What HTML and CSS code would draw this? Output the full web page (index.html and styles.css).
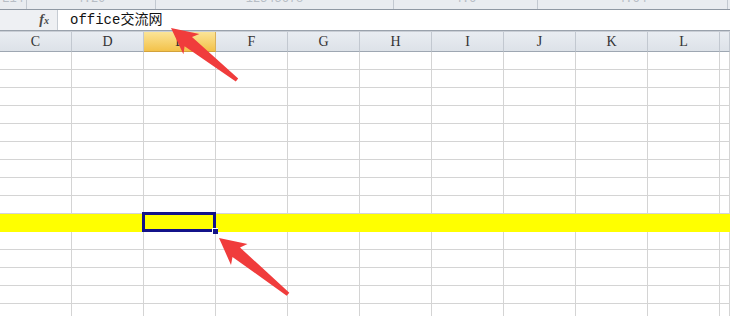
FILE: index.html
```html
<!DOCTYPE html>
<html>
    <head>
        <title>office交流网</title>
        <link rel="stylesheet" href="styles.css">
    </head>
    <body>
        <div class="toolstrip">
            <div class="tool w1"><span>E14</span></div>
            <div class="tool w2"><span>4.29</span></div>
            <div class="tool w3"><span>12345678</span></div>
            <div class="tool w4"><span>4.6</span></div>
            <div class="tool w5"><span>4.64</span></div>
            <div class="tool w6"></div>
        </div>
        <div class="formulabar">
            <div class="namebox"><span class="fx">f<small>x</small></span></div>
            <div class="formula">office交流网</div>
        </div>
        <div class="gap"></div>
        <div class="sheet">
            <div class="row head">
                <div class="cell">C</div>
                <div class="cell">D</div>
                <div class="cell active">E</div>
                <div class="cell">F</div>
                <div class="cell">G</div>
                <div class="cell">H</div>
                <div class="cell">I</div>
                <div class="cell">J</div>
                <div class="cell">K</div>
                <div class="cell">L</div>
                <div class="cell last"></div>
            </div>
        </div>
        <svg class="arrows" width="730" height="316" viewBox="0 0 730 316">
            <polygon points="171,28 199.4,33.9 192,37 238.2,78.6 235.8,81.4 184.6,46.3 183.4,54.3" fill="#f03c3c"/>
            <polygon points="219,238 247.5,244 240,247.5 289.3,292.8 286.7,295.7 232.5,257 231,265" fill="#f03c3c"/>
        </svg>
        <script>
            /* Build the body rows of the sheet; row 10 is filled yellow, cell E selected */
            const sheet = document.querySelector(".sheet");
            for (let r = 0; r < 15; r++) {
                const row = document.createElement("div");
                row.className = "row" + (r === 9 ? " fill" : "");
                for (let c = 0; c < 11; c++) {
                    const cell = document.createElement("div");
                    cell.className = "cell" + (c === 10 ? " last" : "");
                    if (r === 9 && c === 2) cell.classList.add("selected");
                    row.appendChild(cell);
                }
                sheet.appendChild(row);
            }
        </script>
    </body>
</html>
```

FILE: styles.css
```css
/* Excel 2010 style sheet fragment */
body {
    margin: 0;
    width: 730px;
    height: 316px;
    overflow: hidden;
    background: #ffffff;
    font-family: 'Liberation Mono', 'Noto Sans CJK SC', monospace;
    position: relative;
}

.toolstrip {
    display: flex;
    height: 9px;
    background: #e9ecf0;
    border-bottom: 1px solid #8f98a3;
    overflow: hidden;
}

.tool {
    box-sizing: border-box;
    border-right: 1px solid #c3c9d1;
    color: #b7bdc5;
    font-size: 12px;
    text-align: center;
    line-height: 8px;
}

.tool span {
    display: block;
    margin-top: -5px;
}

.w1 { width: 27px; }
.w2 { width: 129px; }
.w3 { width: 238px; }
.w4 { width: 144px; }
.w5 { width: 190px; }
.w6 { flex: 1; border-right: none; }

.formulabar {
    display: flex;
    height: 20px;
    border-bottom: 1px solid #9aa2ac;
}

.namebox {
    width: 58px;
    background: #eef0f3;
    border-right: 1px solid #c6ccd3;
    display: flex;
    justify-content: flex-end;
    align-items: center;
    padding-right: 8px;
    box-sizing: border-box;
}

.fx {
    font-family: 'Liberation Serif', serif;
    font-style: italic;
    font-weight: bold;
    font-size: 14px;
    color: #4a4a4a;
}

.fx small {
    font-size: 10px;
}

.formula {
    padding-left: 12px;
    font-size: 14px;
    line-height: 20px;
    color: #111111;
}

.gap {
    height: 1px;
    background: #c9ced5;
}

.row {
    display: flex;
    height: 18px;
}

.cell {
    box-sizing: border-box;
    width: 72px;
    flex: none;
    border-right: 1px solid #d4d4d4;
    border-bottom: 1px solid #d4d4d4;
}

.cell.last {
    width: 10px;
}

.head {
    height: 20px;
}

.head .cell {
    background: linear-gradient(#e9edf2, #dde2e8);
    border-right: 1px solid #c2c8d0;
    border-bottom: 1px solid #9ea7b2;
    text-align: center;
    font-family: 'Liberation Serif', serif;
    font-size: 14px;
    line-height: 19px;
    color: #333333;
}

.head .cell.active {
    background: linear-gradient(#fbe497, #f3c24a);
    border-bottom: 1px solid #d3a23b;
    border-right: 1px solid #d9b05a;
}

.fill {
    background: #ffff00;
    box-shadow: 0 -1px 0 #ffff00;
}

.fill .cell {
    border-color: #ffff00;
}

.selected {
    position: relative;
}

.selected::after {
    content: "";
    position: absolute;
    left: -2px;
    top: -2px;
    right: -1px;
    bottom: -1px;
    border: 3px solid #13138a;
}

.selected::before {
    content: "";
    position: absolute;
    right: -3px;
    bottom: -3px;
    width: 5px;
    height: 5px;
    background: #13138a;
    border-left: 1px solid #ffffff;
    border-top: 1px solid #ffffff;
    z-index: 1;
}

.arrows {
    position: absolute;
    left: 0;
    top: 0;
    pointer-events: none;
}
```
